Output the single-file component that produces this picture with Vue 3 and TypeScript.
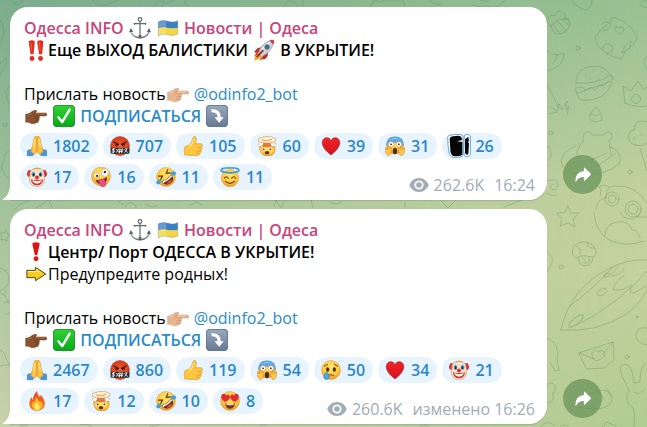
<script setup lang="ts">
interface Segment {
  kind: 'text' | 'emoji' | 'link'
  value: string
}
interface Line {
  bold?: boolean
  parts: Segment[]
}
interface Reaction {
  icon: string
  count: number
}
interface Message {
  id: number
  lines: Line[]
  reactions: Reaction[]
  views: string
  time: string
}

const text = (value: string): Segment => ({ kind: 'text', value })
const emoji = (value: string): Segment => ({ kind: 'emoji', value })
const link = (value: string): Segment => ({ kind: 'link', value })

const author: Segment[] = [
  text('Одесса INFO '),
  emoji('anchor'),
  text(' '),
  emoji('flag'),
  text(' Новости | Одеса'),
]

const signature: Line[] = [
  { parts: [] },
  { parts: [text('Прислать новость'), emoji('point-light'), text(' '), link('@odinfo2_bot')] },
  {
    bold: true,
    parts: [emoji('point-dark'), text(' '), emoji('check'), text(' '), link('ПОДПИСАТЬСЯ'), text(' '), emoji('turn-down')],
  },
]

const messages: Message[] = [
  {
    id: 1,
    lines: [
      { bold: true, parts: [emoji('double-bang'), text('Еще ВЫХОД БАЛИСТИКИ '), emoji('rocket'), text(' В УКРЫТИЕ!')] },
      ...signature,
    ],
    reactions: [
      { icon: 'pray', count: 1802 },
      { icon: 'swear', count: 707 },
      { icon: 'thumb', count: 105 },
      { icon: 'explode', count: 60 },
      { icon: 'heart', count: 39 },
      { icon: 'scream', count: 31 },
      { icon: 'blob', count: 26 },
      { icon: 'clown', count: 17 },
      { icon: 'zany', count: 16 },
      { icon: 'rofl', count: 11 },
      { icon: 'halo', count: 11 },
    ],
    views: '262.6K',
    time: '16:24',
  },
  {
    id: 2,
    lines: [
      { bold: true, parts: [emoji('bang'), text('Центр/ Порт ОДЕССА В УКРЫТИЕ!')] },
      { parts: [emoji('arrow'), text('Предупредите родных!')] },
      ...signature,
    ],
    reactions: [
      { icon: 'pray', count: 2467 },
      { icon: 'swear', count: 860 },
      { icon: 'thumb', count: 119 },
      { icon: 'scream', count: 54 },
      { icon: 'cry', count: 50 },
      { icon: 'heart', count: 34 },
      { icon: 'clown', count: 21 },
      { icon: 'fire', count: 17 },
      { icon: 'explode', count: 12 },
      { icon: 'rofl', count: 10 },
      { icon: 'hearts', count: 8 },
    ],
    views: '260.6K',
    time: 'изменено 16:26',
  },
]
</script>

<template>
  <main class="chat">
    <svg class="doodles" width="647" height="427" viewBox="0 0 647 427" aria-hidden="true">
      <g fill="none" stroke="#4f8559" stroke-opacity=".3" stroke-width="1" stroke-linejoin="round" stroke-linecap="round">
        <!-- left edge -->
        <path d="M0 20q6 8 3 17q-1 4-3 5M0 64l6-6q2 4-1 8l-5 9M10 86q-5 3-4 9t4 10M10 48l-2 3M10 151q-7 2-6 10-5 6 0 12 3 6 6 5" />
        <circle cx="5" cy="125" r="2" />
        <path d="m1 232 3 1 2-3 1 4 3 1-3 2v4l-3-2-3 1 1-4-2-3M0 268q8 2 9 10t-9 13M0 292q7 4 9 12M6 290l-2 5M4 303l6-2M5 314l5-1M0 350q5 2 6 8l4 8M0 366q6-2 10 0" />
        <!-- top edge -->
        <path d="M11 0q2 5 7 4t6-4M92 0q4 6 14 5l12-5M153 7q4-8 12-5l-4 5M166 4l8-4M186 0q-3 5 3 7M285 7q0-5 5-7 6 2 9 7M303 0l-1 7M370 7l4-7 8 2 2-2M383 0l20 0 2 7M430 0q4 6 12 4M472 5q6 3 14 1 12 4 19-6M480 0q7 3 10 0M572 0q5 9 15 10 5-3 5-10M640 4q4 5 7 3M641 3q2-3 6-2" />
        <!-- strip between the bubbles -->
        <path d="M15 209q6-7 15-8M35 209l13-9 5 8M118 200q1 4 5 4M125 207q2-5 7-4t4 6M145 203q4 6 12 3M190 205l7-3 5 3M274 206l2-6 5 8 4-8M311 200l2 8M330 202q6 4 12 0M405 202l0 6M441 201l7 7 8-8M504 207l18-7" />
        <!-- cupcake -->
        <path d="M551 26q-5-3-3-8 3-5 7-2 1-6 6-5t4 8q5-1 4 3M551 26q2 9 8 8 8-1 11-9 1-7-7-6-8 1-12 7M557 20l9 11M563 19l6 7M553 24l6 9" />
        <!-- pillow -->
        <path d="M613 17q14 4 22 16l2 4q-2 8-11 14l-5 8q-14-3-24-14l-2-8q6-9 14-14zM602 24q5-4 9 0 0 5-8 7M620 34q-7-4-5-7 3-1 4 1 4-2 5 2 0 3-4 4M603 50q-1-6 4-6 6 0 6 6l-7 4M622 53q1-7 9-12 1 8-9 12" />
        <circle cx="578" cy="48" r="2" />
        <!-- burger -->
        <path d="M576 83q-1-14 16-17 16 0 20 13M576 83q20 2 35-8 4 2 0 6l-33 12q-5-2-2-5 4-1 6-1l4 3 5-3 4 3 5-5 4 1 4-5M577 91q-1 6 4 9 25 2 31-18M585 75h1M593 70h1M601 72h1M590 79h1M599 79h1M606 75h1" />
        <!-- boat and grass -->
        <path d="M547 51l6 3 4 1q4-3 7-1 0 9-9 14l-8 3M557 55q0 5-4 8M547 84l12 24M549 106l8 5 2-7 3 6 5-9-1 9 3-4-2 9M549 114l8-2" />
        <!-- crown -->
        <path d="M625 103l-2-17 8 5 7-10 6 9 3-3M625 103q10 5 22 3M647 56q-6 8 0 14" />
        <circle cx="636" cy="99" r="4.500" />
        <!-- candy corn -->
        <path d="M596 107q-8 7-6 12 5 5 12 1 0-8-6-13M591 114q5 3 9 0" />
        <!-- bear on a ring -->
        <path d="M583 142q-1-8 4-10 4-1 5 3h12q5-6 8 0 1 4-3 5l2 15M583 142q-7 7-6 14M576 146q-12 4-15 14 1 14 20 14 24 2 38-10 5-12-9-17M589 161l18-8M596 167l20-14" />
        <circle cx="551" cy="133" r="2" />
        <circle cx="630" cy="172" r="2" />
        <!-- ice cream -->
        <path d="M636 145q-8-1-8-10 2-5 6-5 1-9 8-9l5 1M636 145q6 2 11-2M640 148l7 23M634 137v3M641 135h1" />
        <!-- spiral -->
        <path d="M547 181q10-4 11 4-2 7-7 4-2-4 2-5M547 193q4 4 9 2M547 145q5 4 4 12l-4 4" />
        <!-- owl -->
        <path d="M596 209q1-10 10-11 0-13 9-12 20-2 32 17M647 217l-10 0M600 196q2-7-1-9 6-4 10 0" />
        <circle cx="612" cy="199" r="7" />
        <circle cx="612" cy="199" r="4" />
        <circle cx="633" cy="209" r="8" />
        <circle cx="633" cy="209" r="5" />
        <path d="M594 213q1 18 15 27 16 8 35 1M605 236q0-12 12-14 12-2 15 8 6 0 8 8M620 212q4 8 13 7 6-2 8-7" />
        <!-- star -->
        <path d="m568 206 3 7 8 0-6 6 2 8-7-4-8 3 2-7-5-6 8-1z" />
        <!-- mushroom -->
        <path d="M573 255q-3-10 8-13 12-1 15 9 1 6-5 6-8-3-15 1zM579 258q-1 7 6 8 8-1 8-9M576 246q6 3 4 8M587 243q0 6 7 5M583 258l2 3M589 257v4M584 263q3 1 5-1" />
        <circle cx="561" cy="267" r="2" />
        <!-- surfboard -->
        <path d="M561 330q9-42 49-62 17-9 37-8M561 330q35 3 64-15 14-9 22-25M570 306q22-16 43-39M577 325q43-22 70-54M619 266q-8 8-7 10 10-2 12-7M624 275q-10 8-11 15 11 1 18-5-2 10 3 8l12-7" />
        <ellipse cx="602" cy="292" rx="5" ry="3" transform="rotate(-35 602 292)" />
        <ellipse cx="576" cy="321" rx="9" ry="3" transform="rotate(-38 576 321)" />
        <ellipse cx="607" cy="275" rx="3" ry="1.500" transform="rotate(-20 607 275)" />
        <!-- envelope -->
        <path d="M579 353l34-11 1 18-10 8-17 1zM579 353l15 6M613 342l-10 12M592 353q3-5 6-1 5-3 7 1 0 6-9 8-5-3-4-8" />
        <circle cx="627" cy="357" r="2" />
        <circle cx="637" cy="317" r="1" />
        <!-- rabbit -->
        <path d="M629 390q-8-15-9-21 2-8 9-3 4 5 5 17l6-1q0-16 5-18M629 390q-7 10 5 19 1 10 0 18M634 392l5 2M644 389l-3 4M647 328q-12-2-11 9 2 7 11 8" />
        <!-- lower corner shapes -->
        <path d="M547 338q14 6 10 22l2 10-4 1-5-9M547 252q7 4 5 11l-5 9M547 386q4-6 8 0 1 8-3 7 5 8-5 10M590 394q18-10 22 5 0 7-13 10l-20-1M596 388l9 12M606 388l7 9M540 427q8-8 14-2M560 427q3-4 8-1M602 427l5-5 9 4" />
        <!-- bottom edge -->
        <path d="M20 426l8-1M80 425q8-2 12 2M150 426l9-1M260 425h6M420 426q5-2 9 0" />
      </g>
    </svg>

    <article v-for="message in messages" :key="message.id" class="row">
      <div class="bubble">
        <svg class="tail" viewBox="0 0 8 14" aria-hidden="true"><path d="M8 0H7Q6.500 9 0 13v1h8z" fill="#fff" /></svg>
        <div class="body">
          <h2 class="line author">
            <template v-for="(part, i) in author" :key="i">
              <svg v-if="part.kind === 'emoji'" class="emoji" viewBox="0 0 36 36" aria-hidden="true"><use :href="'#e-' + part.value" /></svg>
              <span v-else>{{ part.value }}</span>
            </template>
          </h2>
          <p v-for="(line, n) in message.lines" :key="n" class="line" :class="{ bold: line.bold }">
            <template v-for="(part, i) in line.parts" :key="i">
              <svg v-if="part.kind === 'emoji'" class="emoji" viewBox="0 0 36 36" aria-hidden="true"><use :href="'#e-' + part.value" /></svg>
              <a v-else-if="part.kind === 'link'" class="link" href="#">{{ part.value }}</a>
              <span v-else>{{ part.value }}</span>
            </template>
          </p>
        </div>
        <footer class="footer">
          <button v-for="reaction in message.reactions" :key="reaction.icon" type="button" class="reaction">
            <svg class="face" :class="{ wide: reaction.icon === 'blob' }" viewBox="0 0 36 36" aria-hidden="true"><use :href="'#e-' + reaction.icon" /></svg>
            <span>{{ reaction.count }}</span>
          </button>
          <div class="meta">
            <svg class="eye" viewBox="0 0 20 16" aria-hidden="true">
              <path fill="#a0acb6" fill-rule="evenodd" d="M10 1C5 1 1.500 4.500.300 8 1.500 11.500 5 15 10 15s8.500-3.500 9.700-7C18.500 4.500 15 1 10 1zm0 2.400a4.600 4.600 0 1 1 0 9.200 4.600 4.600 0 0 1 0-9.200z" />
              <circle cx="10" cy="8" r="2.800" fill="#a0acb6" />
            </svg>
            <span class="views">{{ message.views }}</span>
            <time>{{ message.time }}</time>
          </div>
        </footer>
      </div>
      <button type="button" class="share" aria-label="Share">
        <svg viewBox="0 0 20 18" aria-hidden="true"><path fill="#fff" d="M11 1.500q0-1.400 1.200-.500l6.300 6.200q.900.800 0 1.700l-6.300 6.200q-1.200.900-1.200-.500v-3.200Q5.500 11 2.300 16.300q-.900 1-.900-.300Q1.500 5.500 11 4.600z" /></svg>
      </button>
    </article>

    <svg class="sprite" aria-hidden="true">
      <defs>
        <radialGradient id="g-face" cx=".5" cy=".35" r=".65">
          <stop offset="0" stop-color="#ffe76a" /><stop offset=".65" stop-color="#fdc93b" /><stop offset="1" stop-color="#ee9726" />
        </radialGradient>
        <radialGradient id="g-red" cx=".5" cy=".6" r=".6">
          <stop offset="0" stop-color="#f5632d" /><stop offset="1" stop-color="#d43a1c" />
        </radialGradient>
        <linearGradient id="g-green" x2="0" y2="1">
          <stop offset="0" stop-color="#2fd334" /><stop offset="1" stop-color="#08a817" />
        </linearGradient>
        <linearGradient id="g-slate" x2="0" y2="1">
          <stop offset="0" stop-color="#9aaabd" /><stop offset="1" stop-color="#667a94" />
        </linearGradient>
        <linearGradient id="g-heart" x2="0" y2="1">
          <stop offset="0" stop-color="#f22328" /><stop offset="1" stop-color="#d4121c" />
        </linearGradient>
        <linearGradient id="g-fire" x2="0" y2="1">
          <stop offset="0" stop-color="#f0481e" /><stop offset="1" stop-color="#f5821d" />
        </linearGradient>
        <linearGradient id="g-metal" x2="1" y2="0">
          <stop offset="0" stop-color="#aeb4bb" /><stop offset=".5" stop-color="#565c64" /><stop offset="1" stop-color="#989fa6" />
        </linearGradient>

        <symbol id="e-anchor" viewBox="0 0 36 36">
          <g fill="none" stroke="#646b74" stroke-width="2">
            <circle cx="18" cy="4" r="3" /><path d="M18 7v26M10 11h16" />
            <path stroke="url(#g-metal)" stroke-width="2.600" d="M3 23q2 10 15 11 13-1 15-11" />
          </g>
          <path fill="#5a616a" d="m0 25 3-7 4 6zM36 25l-3-7-4 6zM15 30l3 6 3-6z" />
          <circle cx="9" cy="11" r="1.500" fill="#5a616a" /><circle cx="27" cy="11" r="1.500" fill="#5a616a" />
        </symbol>
        <symbol id="e-flag" viewBox="0 0 36 36">
          <path fill="#3d7fc5" d="M2 8q8-4 16-1t16-1v13H2z" />
          <path fill="#f5d63c" d="M2 19q8-4 16-1t16-1v11q-8 4-16 1T2 31z" />
          <path fill="#fff" fill-opacity=".22" d="M2 8q8-4 13-2v23q-6-1-13 2z" />
          <path fill="none" stroke="#56718b" stroke-opacity=".5" d="M2 8q8-4 16-1t16-1v22q-8 4-16 1T2 31z" />
        </symbol>
        <symbol id="e-double-bang" viewBox="0 0 36 36">
          <g fill="#e02d1c"><path d="M6 5q0-3 5-3T16 5l-2 20H9zM20 5q0-3 5-3T30 5l-2 20h-5z" /><circle cx="11.500" cy="32" r="4" /><circle cx="25.500" cy="32" r="4" /></g>
          <path fill="none" stroke="#f9603f" stroke-width="1.400" d="M9.500 5.500 11 20M23.500 5.500 25 20" />
        </symbol>
        <symbol id="e-bang" viewBox="0 0 36 36">
          <path fill="#dc1414" d="M12 5q0-3 6-3t6 3l-4 18h-4z" /><circle cx="18" cy="29" r="4" fill="#dc1414" />
        </symbol>
        <symbol id="e-arrow" viewBox="0 0 36 36">
          <path fill="#f8c91e" stroke="#4b4420" stroke-width="1.600" stroke-linejoin="round" d="M3 12h14V7l17 11-17 11v-5H3z" />
          <path fill="none" stroke="#ffef87" stroke-width="1.600" d="M5 14h14v-3l7 5" />
        </symbol>
        <symbol id="e-rocket" viewBox="0 0 36 36">
          <path fill="#f7a21b" d="M9 22q-6 4-7 13 9-1 15-8z" /><path fill="#e6401d" d="M6 22l-5 7 8-4zM15 29l-5 6 9-3z" /><path fill="#ffe14c" d="M10 24q-4 4-5 8 5-2 9-5z" />
          <path fill="#b72e22" d="M14 14q-8-1-12 8l7 1zM24 22q2 8-7 12l-1-7z" />
          <path fill="#c9d0d7" stroke="#7e8992" d="M8 24Q13 8 27 3q4-2 7-1 1 3-1 7-5 14-19 20z" />
          <path fill="#f3f6f8" d="M12 20Q17 9 28 4l2 1Q18 12 14 23z" />
          <path fill="#d13a28" d="M27 3q4-2 7-1 1 3-1 7z" />
          <circle cx="23" cy="13" r="3.600" fill="#3c6c99" stroke="#56616b" stroke-width="1.500" /><path stroke="#a3261c" stroke-width="3" stroke-linecap="round" d="m7 29 9-10" />
        </symbol>
        <symbol id="e-point-light" viewBox="0 0 36 36">
          <path fill="#e6b48f" stroke="#c99870" stroke-width=".800" d="M1 15q6 0 10-4 4-3 8-2 1 2-2 4h16q3 0 3 2.500T33 18H23q2 2 0 4 1 2-1 4 0 3-3 3-5 3-10 1-3-2-8-2z" />
          <path fill="none" stroke="#bd8660" stroke-width="1" d="M23 18h-7M23 22h-7M22 26h-6M17 13l-4 3" />
          <path fill="none" stroke="#f5d0b1" stroke-width="1.500" d="M17 14.500h15M4 17l7-3" />
        </symbol>
        <symbol id="e-point-dark" viewBox="0 0 36 36">
          <path fill="#8a5331" stroke="#754325" stroke-width=".800" d="M1 15q6 0 10-4 4-3 8-2 1 2-2 4h16q3 0 3 2.500T33 18H23q2 2 0 4 1 2-1 4 0 3-3 3-5 3-10 1-3-2-8-2z" />
          <path fill="none" stroke="#5c331c" stroke-width="1" d="M23 18h-7M23 22h-7M22 26h-6M17 13l-4 3" />
          <path fill="none" stroke="#a66d46" stroke-width="1.500" d="M17 14.500h15M4 17l7-3" />
        </symbol>
        <symbol id="e-check" viewBox="0 0 36 36">
          <rect x=".500" y=".500" width="35" height="35" rx="6" fill="url(#g-green)" stroke="#15832a" stroke-width="1.500" />
          <path fill="none" stroke="#fff" stroke-width="4" stroke-linecap="round" stroke-linejoin="round" d="m9 20 6 8L27 8" />
        </symbol>
        <symbol id="e-turn-down" viewBox="0 0 36 36">
          <rect x=".500" y=".500" width="35" height="35" rx="6" fill="url(#g-slate)" stroke="#53677e" stroke-width="1.500" />
          <path fill="#fff" d="M9 7q15-1 15 13h5l-7.500 9L14 20h5q0-8-10-8z" />
        </symbol>

        <symbol id="e-pray" viewBox="0 0 36 36">
          <path fill="#4c94d8" d="M0 26q5-3 9-2l5 5-3 7H0zM36 26q-5-3-9-2l-5 5 3 7h11z" />
          <path fill="#f9c346" stroke="#d8902a" stroke-width="1" d="M17.500 1q-4-2-5 3L10 17q-3 6-3 11l6 5q5-2 5-8 0 6 5 8l6-5q0-5-3-11L23.500 4q-1-5-5-3z" />
          <path fill="none" stroke="#cb812a" stroke-width="1.200" d="M18 2v24" /><path fill="none" stroke="#ffe68b" stroke-width="2" d="m14 6-2 14M22 6l2 14" />
        </symbol>
        <symbol id="e-thumb" viewBox="0 0 36 36">
          <path fill="#fdc63f" stroke="#de972a" stroke-width="1.200" d="M3 20q1-2 7-3 7-6 8-14 1-3 4-2 4 3 0 13h9q4 0 4 3t-2 4q2 4-1 6 1 4-2 4 0 4-4 4H13q-5-1-10-1-2-7 0-14z" />
          <path fill="none" stroke="#df9528" stroke-width="1.300" d="M26 21h7M25 27h7M24 31h5" /><path fill="none" stroke="#ffeb8b" stroke-width="2" d="M11 19q7-5 9-14" />
        </symbol>
        <symbol id="e-heart" viewBox="0 0 36 36">
          <path fill="url(#g-heart)" stroke="#a40f18" d="M18 34Q3 23 2 12 3 3 11 3q5 0 7 6 2-6 7-6 8 0 9 9-1 11-16 22z" />
        </symbol>
        <symbol id="e-fire" viewBox="0 0 36 36">
          <path fill="url(#g-fire)" d="M18 36Q5 35 4 23q0-6 4-12l2 5q1-9 8-16 0 7 5 11l2-4q8 9 7 17-1 11-14 12z" />
          <path fill="#ffb52b" d="M18 35q-9-2-9-10 1-5 3-7l2 3q0-6 4-10 2 7 6 10l1-3q4 5 3 9-2 7-10 8z" />
          <path fill="#ffec67" d="M18 35q-5-2-5-6 1-5 5-9 1 4 5 8 1 6-5 7z" />
        </symbol>
        <symbol id="e-swear" viewBox="0 0 36 36">
          <circle cx="18" cy="18" r="17" fill="url(#g-red)" stroke="#b22f19" />
          <path fill="none" stroke="#481b16" stroke-width="2.500" stroke-linecap="round" d="m7 11 8 4M29 11l-8 4" /><circle cx="12" cy="16" r="2.300" fill="#3a1715" /><circle cx="24" cy="16" r="2.300" fill="#3a1715" />
          <rect x="1" y="21" width="34" height="11" rx="2" fill="#292b2f" />
          <path fill="none" stroke="#fff" stroke-width="1.400" d="M9 23q-5-1-5 2 5 0 4 3-1 2-5 1M6 22v9M11 23l5 7M16 23l-5 7M18 22l-1 9M22 22l-1 9M16 25h8M15 28h8M26 24l6 6M31 23l-5 7M27 23h4" />
        </symbol>
        <symbol id="e-explode" viewBox="0 0 36 36">
          <path fill="url(#g-face)" stroke="#c77a25" stroke-width=".800" d="M5 18l4 2 4-3 5 2 6-2 3 3 5-2q3 14-7 17-14 4-19-7-2-5-1-10z" />
          <path fill="#e56d36" d="M12 12h12l2 7-8 1-9-1z" /><path fill="#fff0cf" stroke="#c9854e" d="M6 11q-4 0-4-4 1-5 7-4 4-4 10-2 6-3 10 2 6 0 5 5-1 4-6 3-9 4-22 0z" />
          <path fill="none" stroke="#e18537" stroke-width="1.400" d="M9 7q8 4 18-1M4 13l-3 3M32 12l2 3M12 15h12" />
          <ellipse cx="12" cy="24" rx="2.500" ry="3" fill="#fff" /><ellipse cx="24" cy="24" rx="2.500" ry="3" fill="#fff" /><circle cx="12" cy="24" r="1.700" fill="#4d2b1f" /><circle cx="24" cy="24" r="1.700" fill="#4d2b1f" /><ellipse cx="18" cy="30" rx="4" ry="3" fill="#63301c" />
        </symbol>
        <symbol id="e-scream" viewBox="0 0 36 36">
          <circle cx="18" cy="17" r="16" fill="url(#g-face)" /><path fill="#5aa5df" d="M2 17Q2 1 18 1t16 16l-2 1Q18 5 4 18z" /><path fill="#8ac5ec" d="M8 7q10-7 20 0-10-2-20 0z" />
          <circle cx="11" cy="15" r="5" fill="#fff" stroke="#d78b2c" /><circle cx="25" cy="15" r="5" fill="#fff" stroke="#d78b2c" /><circle cx="11" cy="15" r="1.600" fill="#442715" /><circle cx="25" cy="15" r="1.600" fill="#442715" />
          <ellipse cx="18" cy="27" rx="4" ry="6" fill="#5b2a1b" />
          <path fill="#fdc94a" stroke="#cb7f26" d="M1 21q2-1 3 4l2-7q3 0 2 6l3-3q3 1 0 8-1 7-6 6-6-4-4-14zM35 21q-2-1-3 4l-2-7q-3 0-2 6l-3-3q-3 1 0 8 1 7 6 6 6-4 4-14z" />
        </symbol>
        <symbol id="e-cry" viewBox="0 0 36 36">
          <circle cx="18" cy="18" r="17" fill="url(#g-face)" stroke="#dda03a" />
          <path fill="none" stroke="#74401b" stroke-width="1.800" stroke-linecap="round" d="m6 11 6-3M30 11l-6-3M13 28q5-4 10 0" /><ellipse cx="12" cy="17" rx="2.800" ry="4" fill="#4d2b1b" /><ellipse cx="24" cy="17" rx="2.800" ry="4" fill="#4d2b1b" />
          <path fill="#4aa7e6" stroke="#2e80bd" d="M10 21q6 7 5 10-2 5-6 4-5-1-4-6 1-3 5-8z" />
        </symbol>
        <symbol id="e-hearts" viewBox="0 0 36 36">
          <circle cx="18" cy="18" r="17" fill="url(#g-face)" stroke="#dda03a" />
          <path fill="#e52b32" d="M9 20Q1 14 2 9q1-4 5-4 3 0 4 3 3-3 6 0 2 3 0 6-3 4-8 6z" />
          <path fill="#e52b32" d="M27 20q8-6 7-11-1-4-5-4-3 0-4 3-3-3-6 0-2 3 0 6 3 4 8 6z" /><path fill="#713719" d="M9 22q9 3 18 0-2 10-9 10T9 22z" /><path fill="#fff" d="M11 23q7 2 14 0l-1 2q-6 1-12 0z" />
        </symbol>
        <symbol id="e-rofl" viewBox="0 0 36 36">
          <circle cx="18" cy="18" r="17" fill="url(#g-face)" stroke="#dda03a" />
          <g transform="rotate(-35 18 18)"><path fill="none" stroke="#603317" stroke-width="2" stroke-linecap="round" d="m8 9 6 4-6 3M28 9l-6 4 6 3" /><path fill="#642f1a" d="M7 20q11 3 22 0 0 12-11 12T7 20z" /><path fill="#fff" d="M8 21q10 3 20 0v3q-10 2-20 0z" /><path fill="#de5649" d="M12 29q6-4 12 0-6 4-12 0z" /></g>
          <path fill="#45a4de" stroke="#2f86bd" stroke-width=".700" d="M10 22q-2 8-5 9-5 0-4-4 1-3 9-5zM25 11q7-4 10-2 2 5-2 6-4 1-8-4z" />
        </symbol>
        <symbol id="e-zany" viewBox="0 0 36 36">
          <circle cx="18" cy="17" r="17" fill="url(#g-face)" stroke="#dda03a" />
          <circle cx="10" cy="15" r="5" fill="#fff" stroke="#c68b4c" /><circle cx="25" cy="10" r="7" fill="#fff" stroke="#c68b4c" /><circle cx="11" cy="16" r="2" fill="#4d2b1b" /><circle cx="25" cy="9" r="2.300" fill="#4d2b1b" />
          <path fill="#6b2c1c" d="M8 23q11 2 21-5 0 11-9 13-8 1-12-8z" /><path fill="#ed4d80" stroke="#c83265" d="M13 24l10-3q5 8 4 11-4 6-8 3-3-2-6-11z" />
        </symbol>
        <symbol id="e-halo" viewBox="0 0 36 36">
          <circle cx="18" cy="20" r="15.500" fill="url(#g-face)" stroke="#dda03a" />
          <ellipse cx="18" cy="6" rx="16" ry="4.500" fill="none" stroke="#3c91d8" stroke-width="3" /><path fill="none" stroke="#93d4f6" d="M4 5q14-7 28 0" />
          <path fill="none" stroke="#633517" stroke-width="2" stroke-linecap="round" d="M8 20q3-5 7 0M21 20q4-5 7 0M10 26q8 7 16 0" />
        </symbol>
        <symbol id="e-clown" viewBox="0 0 36 36">
          <path fill="#db3433" d="M8 7Q2 3 1 9q-3 5 2 9l5-1zM28 7q6-4 7 2 3 5-2 9l-5-1z" />
          <path fill="#fae4cc" stroke="#c68961" d="M5 15Q5 2 18 2t13 13q4 20-13 20T5 15z" />
          <path fill="#59b3e6" d="M8 12q3-8 7 0l-1 5H9zM21 12q4-8 7 0l-1 5h-5z" /><ellipse cx="12" cy="14" rx="2" ry="3" fill="#3b2827" /><ellipse cx="24" cy="14" rx="2" ry="3" fill="#3b2827" />
          <path fill="#db302e" d="M7 22q11 3 22 0-1 11-11 11T7 22z" /><path fill="#fff" d="M9 24q9 3 18 0-3 6-9 6t-9-6z" /><circle cx="18" cy="19" r="3.500" fill="#e92b2b" /><path fill="none" stroke="#e5a24a" stroke-width="2" d="M12 4q6-3 12 0" />
        </symbol>
        <symbol id="e-blob" viewBox="0 0 36 36">
          <path fill="#fff" stroke="#4b9ad3" stroke-width="1.300" d="M1 4q3-4 20-3l3 2v29q-3 4-15 3-5-1-6-8-2-8-2-23zM26 2q3-2 7-1l2 2v28q-2 4-7 3-3-2-3-8z" />
          <path fill="#050505" d="M4 8q0-5 9-5 8-1 9 3l1 3-8 2 8 1v19q-4 3-14 2-4-2-4-10zM27 8l5-4 1 7-2 1 2 2-1 16q-3 3-5-2z" />
        </symbol>
      </defs>
    </svg>
  </main>
</template>

<style>
body {
  margin: 0;
}
</style>

<style scoped>
.chat {
  position: relative;
  display: flex;
  flex-direction: column;
  gap: 9px;
  box-sizing: border-box;
  min-height: 100vh;
  padding: 7px 45px 3px 10px;
  overflow: hidden;
  background: linear-gradient(180deg, #7bad8d, #a2c29c 47%, #c7d1aa);
  color: #000;
  font: 16px/22px "Open Sans", "Noto Sans", sans-serif;
}
.chat::before {
  content: "";
  position: absolute;
  inset: 0;
  background: linear-gradient(180deg, #98c091, #c2d19e 45%, #c3d29e 65%, #b2cb92);
  mask-image: linear-gradient(to right, transparent, #000);
}
.doodles {
  position: absolute;
  top: 0;
  left: 0;
}
.sprite {
  position: absolute;
  width: 0;
  height: 0;
}
.row {
  position: relative;
  display: flex;
  align-items: flex-end;
  gap: 16px;
}
.bubble {
  position: relative;
  flex: 1;
  min-width: 0;
  box-sizing: border-box;
  padding: 10px 12px 10px 10px;
  border-radius: 18px 18px 18px 0;
  background: #fff;
  box-shadow: 0 1px 1px rgba(70, 110, 70, 0.25);
}
.tail {
  position: absolute;
  left: -7px;
  bottom: 0;
  width: 8px;
  height: 14px;
}
.body {
  padding-left: 4px;
}
.line {
  min-height: 22px;
  margin: 0;
  font-size: 16px;
  font-weight: 400;
  white-space: pre-wrap;
}
.bold {
  font-weight: 600;
}
.author {
  color: #c7457b;
  font-weight: 600;
}
.emoji {
  width: 22px;
  height: 22px;
  margin: 0 1px;
  vertical-align: top;
}
.link {
  color: #2a8bcb;
  text-decoration: none;
}
.footer {
  display: flex;
  flex-wrap: wrap;
  gap: 5px;
  margin-top: 6px;
}
.reaction {
  display: flex;
  align-items: center;
  gap: 6px;
  height: 26px;
  padding: 0 8px 0 7px;
  border: 0;
  border-radius: 13px;
  background: #e8f4fd;
  color: #2a87c9;
  font: inherit;
  font-weight: 600;
}
.face {
  width: 20px;
  height: 20px;
}
.wide {
  width: 24px;
  height: 26px;
  margin: 0 -2px;
}
.meta {
  display: flex;
  align-items: center;
  align-self: flex-end;
  margin: 0 0 -5px auto;
  color: #a0acb6;
  line-height: 20px;
}
.eye {
  width: 20px;
  height: 16px;
  margin-right: 5px;
}
.views {
  margin-right: 10px;
}
.share {
  display: flex;
  align-items: center;
  justify-content: center;
  width: 39px;
  height: 39px;
  margin-bottom: 6px;
  padding: 0;
  border: 0;
  border-radius: 50%;
  background: rgba(105, 148, 91, 0.75);
}
.share svg {
  width: 18px;
  height: 16px;
}
</style>
